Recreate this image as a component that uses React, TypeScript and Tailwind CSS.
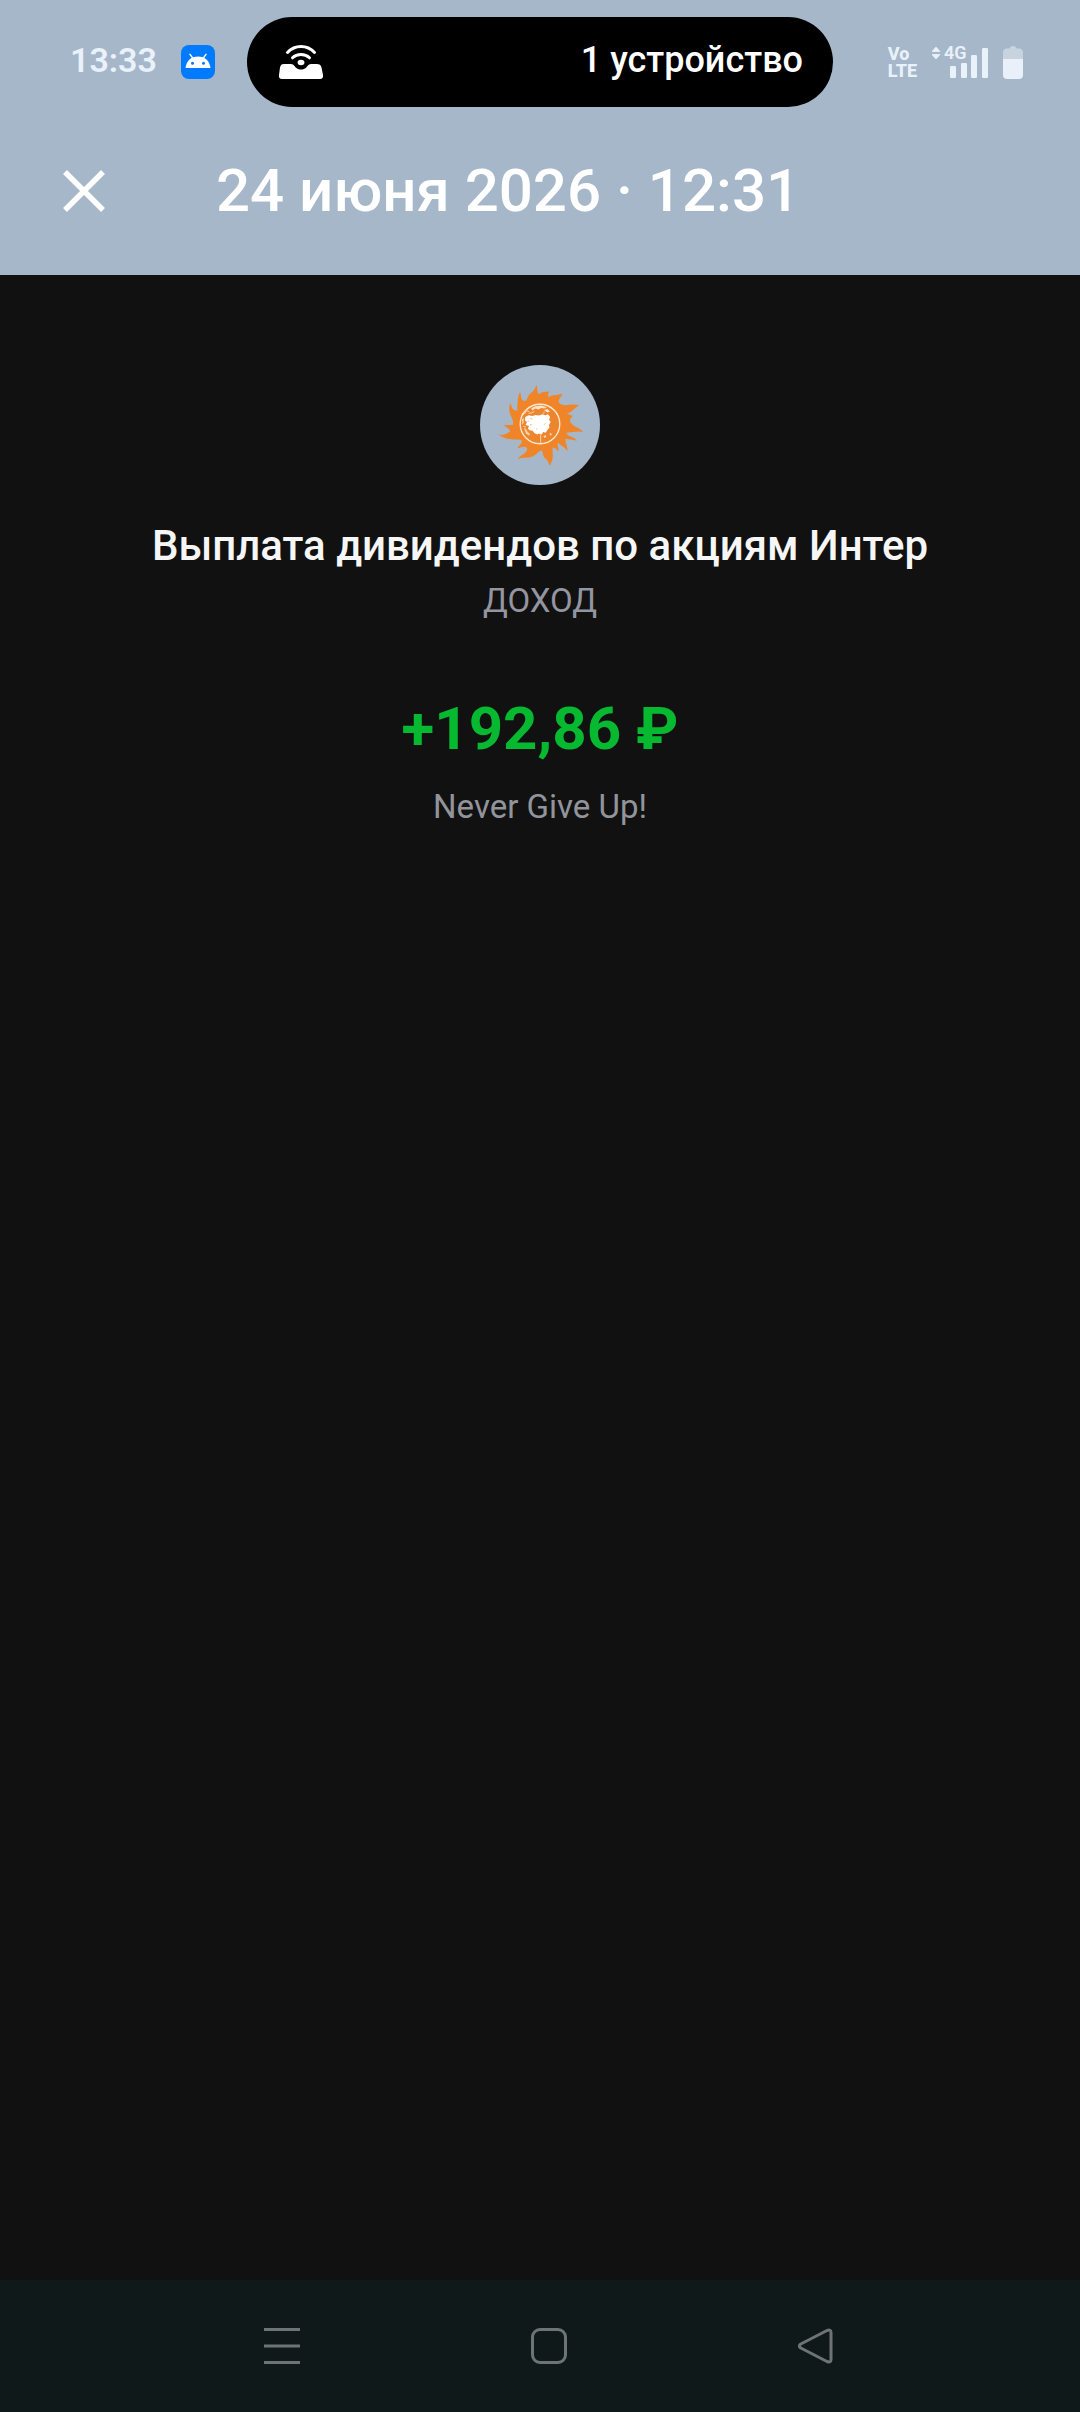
const HotspotIcon = () => (
  <svg viewBox="0 0 46 34" className="h-[34px] w-[46px]" fill="none" aria-hidden="true">
    <path
      d="M6 19H12.500C15.500 19 16 20.500 17.500 22.200C20.400 25.400 25.600 25.400 28.500 22.200C30 20.500 30.500 19 33.500 19H38.500C41.500 19 43 20 43.500 22.500L45 30C45.400 32.400 44.300 34 42 34H4C1.700 34 0.600 32.400 1 30L2 22.500C2.500 20 3.500 19 6 19Z"
      fill="#fff"
    />
    <ellipse cx="23" cy="17.500" rx="3.400" ry="2.800" fill="#fff" />
    <path d="M14.500 12.800C19 8.400 27 8.400 31.500 12.800" stroke="#fff" strokeWidth="3" strokeLinecap="round" />
    <path d="M9.500 7.500C17 -0.500 29 -0.500 36.500 7.500" stroke="#fff" strokeWidth="3" strokeLinecap="round" />
  </svg>
);

const AndroidIcon = () => (
  <svg viewBox="0 0 34 34" className="size-[34px]" aria-hidden="true">
    <rect width="34" height="34" rx="8" fill="#007aff" />
    <path d="M4.500 23C5.300 16 10 11.600 17 11.600S28.700 16 29.500 23Z" fill="#fff" />
    <path d="M12 13.500L9 9.300M22 13.500L25 9.300" stroke="#fff" strokeWidth="1.400" strokeLinecap="round" />
    <circle cx="11.500" cy="18.200" r="1.500" fill="#007aff" />
    <circle cx="22.500" cy="18.200" r="1.500" fill="#007aff" />
  </svg>
);

const SignalIcon = () => (
  <svg viewBox="0 0 56 32" className="h-8 w-14" fill="#e9f1fa" aria-hidden="true">
    <path d="M4 1L8 5.500H0ZM4 13L8 8.500H0Z" stroke="#e9f1fa" strokeLinejoin="round" strokeWidth="0.800" />
    <rect x="18" y="20" width="6" height="12" rx="1.200" />
    <rect x="29" y="17" width="6" height="15" rx="1.200" />
    <rect x="39" y="9" width="6" height="23" rx="1.200" />
    <rect x="50" y="2" width="6" height="30" rx="1.200" />
  </svg>
);

const BatteryIcon = () => (
  <svg viewBox="0 0 20 33" className="h-[33px] w-5" aria-hidden="true">
    <path
      d="M4 2.500H6.500C7 1 8 0 10 0S13 1 13.500 2.500H16C18.500 2.500 20 4 20 6.500V13H0V6.500C0 4 1.500 2.500 4 2.500Z"
      fill="#c7d3df"
    />
    <path d="M0 13H20V29C20 31.500 18.500 33 16 33H4C1.500 33 0 31.500 0 29Z" fill="#eaf0fa" />
  </svg>
);

const SunLogo = () => (
  <svg viewBox="31 29 358 358" className="size-[120px] rounded-full bg-[#a6b7ca]" role="img" aria-label="Интер РАО">
    <path
      d="M199 89C204 98 199 106 206 116C215 109 226 109 238 108C234 114 232 119 236 125C249 115 263 121 277 114C273 127 263 132 266 140C270 146 276 148 286 149C300 148 313 145 327 150C311 157 308 170 290 174C296 178 304 179 308 181C303 187 298 188 300 198C309 215 325 212 339 229C321 225 311 229 288 231C294 244 310 240 320 255C306 251 298 251 286 249C284 260 293 271 292 286C284 272 273 271 264 260C260 268 267 277 265 286C258 280 254 275 248 275C245 292 254 304 240 329C233 323 237 315 226 308C217 301 220 289 216 285C207 283 204 292 193 299C178 309 164 302 144 309C151 296 165 297 171 283C174 275 168 274 162 273L143 277C148 268 155 265 157 255C142 244 122 262 84 235C101 241 108 235 119 229C126 223 111 217 102 209C114 209 121 207 130 207C133 185 109 174 122 142C126 153 126 161 136 164C146 168 141 161 142 152C145 138 141 125 151 110C155 119 151 128 159 134C166 140 170 135 173 126C179 112 194 110 199 89Z"
      fill="#ef8528"
    />
    <circle cx="210" cy="205" r="59" fill="#ec852d" stroke="#ffe8cf" strokeWidth="4" />
    <path
      d="M184 158L196 152L214 150L230 155L224 159L213 157L206 162L196 159L187 165ZM222 163L232 160L240 168L232 171Z"
      fill="#ffe3c6"
    />
    <path
      d="M166 184L176 179L188 181L196 178L207 180L217 176L226 179L234 176L240 184L237 192L242 199L237 207L238 216L232 223L227 231L220 229L214 237L207 233L202 236L193 232L188 225L179 224L174 219L177 211L167 208L171 200L165 194Z"
      fill="#fff"
    />
    <path
      d="M156 190L162 187L161 202L157 208ZM162 217L168 219L173 228L180 234L178 240L168 234ZM220 241L227 238L229 244L223 247ZM238 234L242 231L246 236L241 240Z"
      fill="#fbd0a4"
    />
    <path
      d="M155 176L164 174L170 166L178 168M176 173L186 172L193 167M160 212L168 214M224 168L219 174M212 238V263"
      fill="none"
      stroke="#ffe3c6"
      strokeWidth="2.500"
    />
    <path d="M180 188L187 190M180 206L186 208M222 207L227 203M198 222L202 219M172 198L177 196" fill="none" stroke="#f3a35d" strokeWidth="2" />
  </svg>
);

const StatusBar = () => (
  <div className="grid h-[124px] grid-cols-[247px_1fr_247px] items-start text-[#e9f1fa]">
    <div className="flex h-[124px] items-center gap-6 pl-[70px]">
      <span className="pb-1 text-[34px] leading-10 font-semibold">13:33</span>
      <AndroidIcon />
    </div>
    <div className="mt-[17px] flex h-[90px] items-center justify-between rounded-full bg-black pr-[30px] pl-[31px] text-white">
      <HotspotIcon />
      <span className="pb-1 text-[36px] leading-10 font-medium">1 устройство</span>
    </div>
    <div className="flex h-[124px] items-center justify-end gap-[15px] pr-[57px]">
      <div className="text-[18px] leading-[17px] font-extrabold">
        <div>Vo</div>
        <div>LTE</div>
      </div>
      <div className="relative">
        <SignalIcon />
        <span className="absolute -top-px left-3 text-[18px] leading-4 font-semibold">4G</span>
      </div>
      <BatteryIcon />
    </div>
  </div>
);

const NavBar = () => (
  <nav className="flex h-[132px] items-center justify-between bg-[#101919] pr-[216px] pl-[234px] text-[#6e7475]">
    <button type="button" aria-label="Недавние" className="flex size-24 items-center justify-center">
      <svg viewBox="0 0 36 36" className="size-9" stroke="currentColor" strokeWidth="3">
        <path d="M0 1.500H36M0 18H36M0 34.500H36" />
      </svg>
    </button>
    <button type="button" aria-label="Домой" className="flex size-24 items-center justify-center">
      <svg viewBox="0 0 36 36" className="size-9" fill="none" stroke="currentColor" strokeWidth="3">
        <rect x="1.500" y="1.500" width="33" height="33" rx="7.500" />
      </svg>
    </button>
    <button type="button" aria-label="Назад" className="flex size-24 items-center justify-center">
      <svg viewBox="0 0 36 36" className="size-9" fill="none" stroke="currentColor" strokeWidth="3" strokeLinejoin="round">
        <path d="M2.800 16L29 2.500Q33 1 33 4.500V31.500Q33 35 29 33.500L2.800 20Q-0.200 18 2.800 16Z" />
      </svg>
    </button>
  </nav>
);

const App = () => {
  return (
    <div className="flex min-h-screen w-full flex-col bg-[#111111] font-[Roboto,sans-serif]">
      <header className="bg-[#a6b7ca]">
        <StatusBar />
        <div className="flex h-[151px] items-start gap-[96px] pt-[31px] pl-12 text-white">
          <button type="button" aria-label="Закрыть" className="flex size-[72px] items-center justify-center">
            <svg viewBox="0 0 42 42" className="size-[42px]" stroke="currentColor" strokeWidth="5.500">
              <path d="M2 2L40 40M40 2L2 40" />
            </svg>
          </button>
          <h1 className="text-[60px] leading-[72px] font-medium">24 июня 2026 · 12:31</h1>
        </div>
      </header>

      <main className="flex flex-1 flex-col items-center pt-[90px] text-center">
        <SunLogo />
        <h2 className="mt-9 text-[42px] leading-[50px] font-medium text-[#f6f6f6]">
          Выплата дивидендов по акциям Интер
        </h2>
        <p className="mt-[10px] text-[33px] leading-10 text-[#9395a0]">ДОХОД</p>
        <p className="mt-[72px] text-[60px] leading-[72px] font-bold text-[#07b931]">+192,86 ₽</p>
        <p className="mt-[22px] text-[33px] leading-10 text-[#92949b]">Never Give Up!</p>
      </main>

      <NavBar />
    </div>
  );
};

export default App;
